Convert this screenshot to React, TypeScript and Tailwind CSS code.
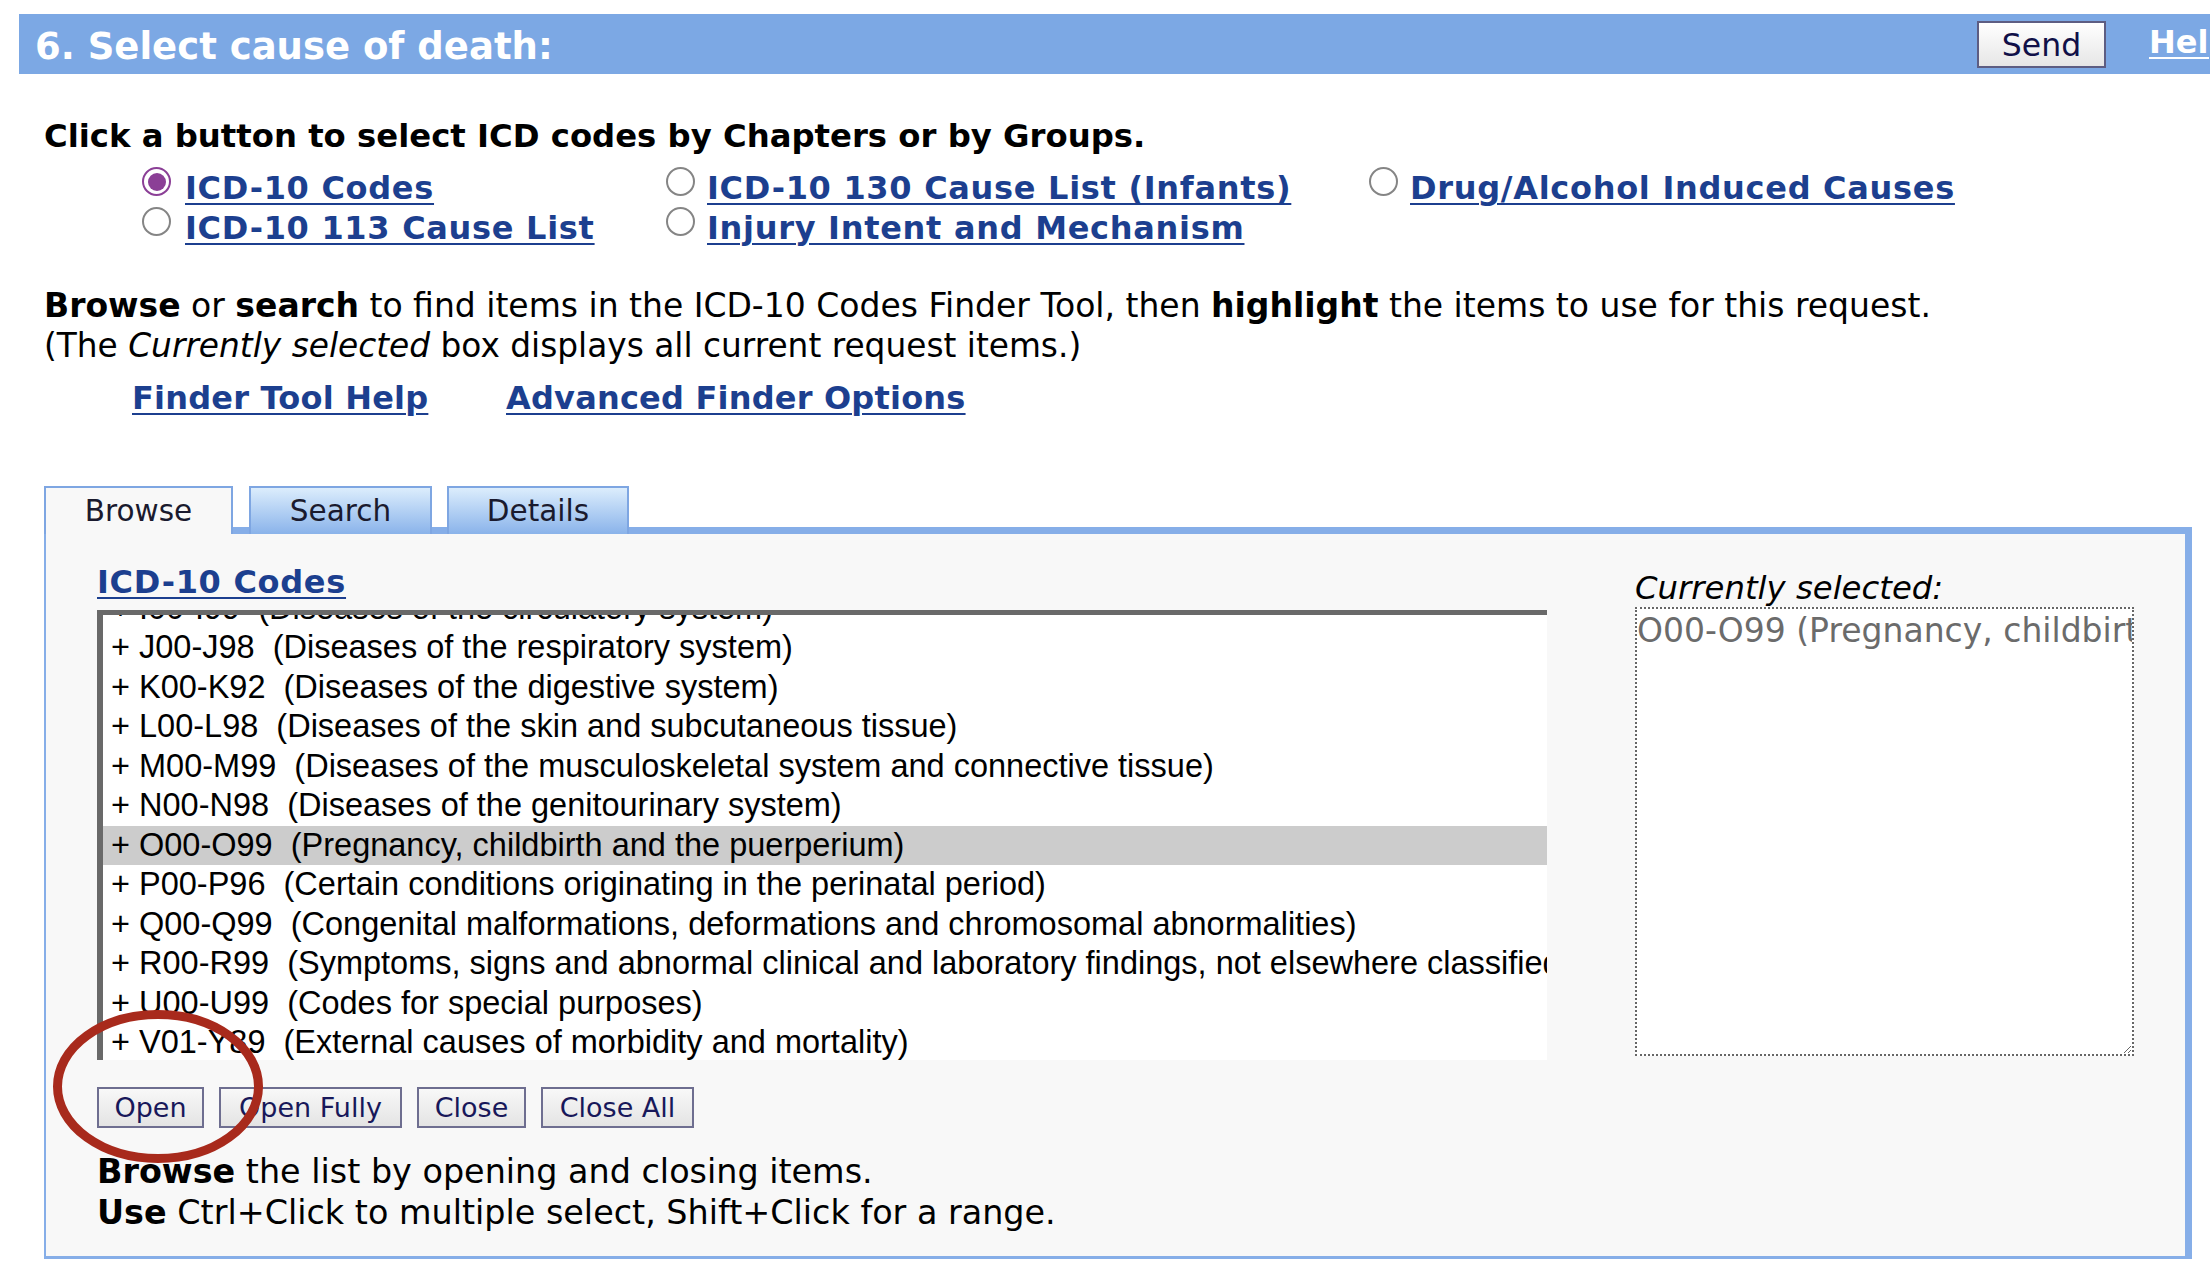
import React from "react"

const rows = [
  ["I00-I99", "Diseases of the circulatory system"],
  ["J00-J98", "Diseases of the respiratory system"],
  ["K00-K92", "Diseases of the digestive system"],
  ["L00-L98", "Diseases of the skin and subcutaneous tissue"],
  ["M00-M99", "Diseases of the musculoskeletal system and connective tissue"],
  ["N00-N98", "Diseases of the genitourinary system"],
  ["O00-O99", "Pregnancy, childbirth and the puerperium"],
  ["P00-P96", "Certain conditions originating in the perinatal period"],
  ["Q00-Q99", "Congenital malformations, deformations and chromosomal abnormalities"],
  ["R00-R99", "Symptoms, signs and abnormal clinical and laboratory findings, not elsewhere classified"],
  ["U00-U99", "Codes for special purposes"],
  ["V01-Y89", "External causes of morbidity and mortality"]
]

function Radio({ checked }: { checked?: boolean }) {
  if (checked) {
    return (
      <span className="-mt-[1px] w-[29px] h-[29px] shrink-0 rounded-full border-[2.5px] border-[#8b3f96] bg-white flex items-center justify-center">
        <span className="w-[18px] h-[18px] rounded-full bg-[#8b3f96]"></span>
      </span>
    )
  }
  return (
    <span className="-mt-[1px] w-[29px] h-[29px] shrink-0 rounded-full border-2 border-[#858585] bg-white"></span>
  )
}

function Link({ children, wide }: { children: React.ReactNode, wide?: boolean }) {
  return (
    <a className={`text-[#1c3f8f] font-bold underline decoration-2 underline-offset-[4px] whitespace-nowrap ${wide ? "tracking-[0.7px]" : "tracking-[0.2px]"}`}>
      {children}
    </a>
  )
}

function Btn({ label, w }: { label: string, w: string }) {
  return (
    <button className={`${w} h-[41px] border-2 border-[#6e6e90] bg-gradient-to-b from-[#f8f8f8] to-[#e4e4e4] text-[27px] leading-none text-[#18185a]`}>
      {label}
    </button>
  )
}

export default function App() {
  return (
    <div className="relative w-full h-[1276px] overflow-hidden bg-white text-black font-['DejaVu_Sans',Verdana,sans-serif]">

      {/* TITLE BAR */}
      <div className="mt-[14px] ml-[19px] w-[2260px] h-[60px] bg-[#7ca8e4] flex items-center">
        <div className="w-[1958px] h-[60px] pl-[16px] pt-[6px] text-[37px] leading-[54px] font-bold text-white">
          6. Select cause of death:
        </div>
        <button className="w-[129px] h-[47px] pt-[4px] border-2 border-[#5d5d82] bg-gradient-to-b from-white to-[#e6e6e6] text-[31.5px] leading-none text-[#101048]">
          Send
        </button>
        <a className="ml-[43px] -mt-[5px] text-[32px] font-bold text-white underline decoration-2 underline-offset-[4px]">
          Help
        </a>
      </div>

      {/* INTRO */}
      <div className="ml-[44px] text-[33px]">
        <div className="mt-[42px] leading-[40px] font-bold text-[32.3px]">
          Click a button to select ICD codes by Chapters or by Groups.
        </div>

        <div className="mt-[12px] ml-[98px] grid grid-cols-[524px_703px_auto] leading-[40px] text-[32px]">
          <div className="flex items-start gap-[14px]"><Radio checked /><Link wide>ICD-10 Codes</Link></div>
          <div className="flex items-start gap-[12px]"><Radio /><Link wide>ICD-10 130 Cause List (Infants)</Link></div>
          <div className="flex items-start gap-[12px]"><Radio /><Link wide>Drug/Alcohol Induced Causes</Link></div>
          <div className="flex items-start gap-[14px]"><Radio /><Link wide>ICD-10 113 Cause List</Link></div>
          <div className="flex items-start gap-[12px]"><Radio /><Link wide>Injury Intent and Mechanism</Link></div>
        </div>

        <div className="mt-[38px] leading-[40px] whitespace-nowrap">
          <b>Browse</b> or <b>search</b> to find items in the ICD-10 Codes Finder Tool, then <b>highlight</b> the items to use for this request.
          <br />
          <span className="text-[32.8px]">(The <i>Currently selected</i> box displays all current request items.)</span>
        </div>

        <div className="mt-[12px] ml-[88px] flex leading-[40px] text-[32px]">
          <div className="w-[374px]"><Link>Finder Tool Help</Link></div>
          <Link>Advanced Finder Options</Link>
        </div>
      </div>

      {/* TABS + PANEL */}
      <div className="mt-[68px] ml-[44px] w-[2148px]">
        <div className="relative z-10 -mb-[7px] flex items-end text-[29.5px] text-[#1a1a2e]">
          <div className="w-[189px] h-[48px] border-2 border-b-0 border-[#7ea6e2] bg-[#f8f8f8] text-center leading-[46px]">
            Browse
          </div>
          <div className="ml-[16px] w-[183px] h-[48px] border-2 border-b-0 border-[#7ea6e2] bg-gradient-to-b from-[#dcedfc] to-[#8ab3ea] text-center leading-[46px]">
            Search
          </div>
          <div className="ml-[15px] w-[182px] h-[48px] border-2 border-b-0 border-[#7ea6e2] bg-gradient-to-b from-[#dcedfc] to-[#8ab3ea] text-center leading-[46px]">
            Details
          </div>
        </div>

        <div className="border-t-[7px] border-r-[7px] border-b-[3px] border-l-2 border-[#86aee8] bg-[#f8f8f8] pt-[28px] pl-[51px] pb-[23px] text-[32px]">
          <div className="flex">

            {/* LEFT: BROWSE LIST */}
            <div className="w-[1450px]">
              <div className="leading-[40px]"><Link wide>ICD-10 Codes</Link></div>

              <div className="mt-[8px] h-[450px] border-t-[5px] border-l-[6px] border-[#696969] bg-white overflow-hidden text-[32.5px] font-['Liberation_Sans',Arial,sans-serif]">
                <div className="-mt-[26.5px]">
                  {rows.map(([code, desc]) => (
                    <div
                      key={code}
                      className={`h-[39.5px] leading-[39.5px] pl-[8px] whitespace-pre ${code === "O00-O99" ? "bg-[#cccccc]" : ""}`}
                    >
                      {`+ ${code}  (${desc})`}
                    </div>
                  ))}
                </div>
              </div>

              <div className="mt-[27px] flex gap-[15px]">
                <Btn label="Open" w="w-[107px]" />
                <Btn label="Open Fully" w="w-[183px]" />
                <Btn label="Close" w="w-[109px]" />
                <Btn label="Close All" w="w-[153px]" />
              </div>

              <div className="mt-[23px] leading-[41px] whitespace-nowrap text-[33.4px]">
                <b>Browse</b> the list by opening and closing items.
                <br />
                <b>Use</b> Ctrl+Click to multiple select, Shift+Click for a range.
              </div>
            </div>

            {/* RIGHT: CURRENTLY SELECTED */}
            <div className="ml-[88px] w-[499px] mt-[7px]">
              <div className="italic leading-[38px] text-[32.3px]">Currently selected:</div>
              <textarea
                readOnly
                wrap="off"
                value="O00-O99 (Pregnancy, childbirth and the puerperium)"
                className="block w-[499px] h-[449px] border-2 border-dotted border-[#666666] bg-white pt-[5px] pl-0 text-[33px] leading-[34px] text-[#6b6b6b] overflow-hidden outline-none font-['DejaVu_Sans',Verdana,sans-serif]"
              />
            </div>

          </div>
        </div>
      </div>

      {/* RED ANNOTATION CIRCLE */}
      <svg className="absolute left-[53px] top-[1010px] w-[210px] h-[153px] pointer-events-none" viewBox="0 0 210 153">
        <ellipse cx="105" cy="76.5" rx="100.5" ry="72" fill="none" stroke="#a82a1c" strokeWidth="9" />
      </svg>

    </div>
  )
}
